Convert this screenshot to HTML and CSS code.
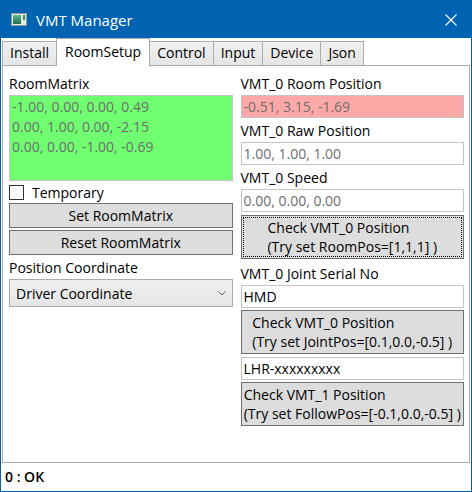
FILE: index.html
```html
<!DOCTYPE html>
<html lang="en">
<head>
<meta charset="utf-8">
<title>VMT Manager</title>
<link rel="stylesheet" href="styles.css">
</head>
<body>
<div class="window">
  <div class="titlebar">
    <svg class="app-icon" width="16" height="13" viewBox="0 0 16 13">
      <defs>
        <linearGradient id="ig" x1="0" y1="0" x2="0" y2="1">
          <stop offset="0" stop-color="#5fb88e"/>
          <stop offset="1" stop-color="#23704e"/>
        </linearGradient>
      </defs>
      <rect x="0.5" y="0.5" width="15" height="12" fill="#e4ebe7" stroke="#8f9a95"/>
      <rect x="2" y="2" width="8" height="9" fill="url(#ig)"/>
      <rect x="12" y="2" width="2" height="5" fill="#3d8c64"/>
    </svg>
    <span class="title">VMT Manager</span>
    <svg class="close" width="12" height="12" viewBox="0 0 12 12">
      <path d="M0.5 0.5L11.5 11.5M11.5 0.5L0.5 11.5" stroke="#ffffff" stroke-width="1.1" fill="none"/>
    </svg>
  </div>
  <div class="client">
    <div class="tabstrip">
      <div class="tab">Install</div>
      <div class="tab selected">RoomSetup</div>
      <div class="tab">Control</div>
      <div class="tab">Input</div>
      <div class="tab">Device</div>
      <div class="tab">Json</div>
    </div>
    <div class="panel">
      <div class="col">
        <div class="label">RoomMatrix</div>
        <div class="textbox readonly matrix">-1.00, 0.00, 0.00, 0.49<br>0.00, 1.00, 0.00, -2.15<br>0.00, 0.00, -1.00, -0.69</div>
        <div class="check"><span class="box"></span><span>Temporary</span></div>
        <div class="button"><span class="btn-text">Set RoomMatrix</span></div>
        <div class="button"><span class="btn-text">Reset RoomMatrix</span></div>
        <div class="label">Position Coordinate</div>
        <div class="combo">
          <span class="combo-text">Driver Coordinate</span>
          <svg class="chevron" width="8" height="5" viewBox="0 0 8 5"><path d="M0.5 0.5L4 4L7.5 0.5" stroke="#606060" stroke-width="1" fill="none"/></svg>
        </div>
      </div>
      <div class="col">
        <div class="label">VMT_0 Room Position</div>
        <div class="textbox readonly alert">-0.51, 3.15, -1.69</div>
        <div class="label">VMT_0 Raw Position</div>
        <div class="textbox readonly">1.00, 1.00, 1.00</div>
        <div class="label">VMT_0 Speed</div>
        <div class="textbox readonly">0.00, 0.00, 0.00</div>
        <div class="button tall focused"><span class="btn-text">Check VMT_0 Position<br>(Try set RoomPos=[1,1,1] )</span></div>
        <div class="label">VMT_0 Joint Serial No</div>
        <div class="textbox">HMD</div>
        <div class="button tall"><span class="btn-text">Check VMT_0 Position<br>(Try set JointPos=[0.1,0.0,-0.5] )</span></div>
        <div class="textbox">LHR-xxxxxxxxx</div>
        <div class="button tall"><span class="btn-text">Check VMT_1 Position<br>(Try set FollowPos=[-0.1,0.0,-0.5] )</span></div>
      </div>
    </div>
    <div class="statusbar">0 : OK</div>
  </div>
</div>
</body>
</html>
```

FILE: styles.css
```css
* { box-sizing: border-box; }
html, body { margin: 0; padding: 0; }
body {
  width: 472px;
  height: 492px;
  overflow: hidden;
  font-family: "Open Sans", "Noto Sans", sans-serif;
  font-size: 14px;
  color: #000;
  background: #fff;
}
.window {
  width: 472px;
  height: 492px;
  border: 1px solid #0063b1;
  display: flex;
  flex-direction: column;
  background: #fff;
}
.titlebar {
  height: 37px;
  flex: none;
  background: #0063b1;
  color: #fff;
  display: flex;
  align-items: center;
}
.app-icon { margin-left: 10px; flex: none; }
.title { margin-left: 9px; font-size: 15px; line-height: 20px; flex: 1; }
.close { margin-right: 14px; flex: none; }

.client { flex: 1; min-height: 0; display: flex; flex-direction: column; }

.tabstrip {
  height: 28px;
  flex: none;
  display: flex;
  align-items: flex-end;
  padding-left: 1px;
  margin-bottom: -1px;
  position: relative;
  z-index: 1;
}
.tab {
  height: 25px;
  border: 1px solid #acacac;
  background: linear-gradient(#f0f0f0, #e5e5e5);
  padding: 0 7px;
  line-height: 22px;
  margin-left: -1px;
  white-space: nowrap;
}
.tab:first-child { margin-left: 0; }
.tab.selected {
  height: 28px;
  background: #fff;
  border-bottom: none;
  padding: 0 8px;
  line-height: 26px;
  position: relative;
  z-index: 2;
}

.panel {
  flex: 1;
  min-height: 0;
  margin: 0 1px;
  border: 1px solid #acacac;
  display: grid;
  grid-template-columns: 1fr 1fr;
  column-gap: 8px;
  padding: 5px 5px 0 6px;
  align-items: start;
}
.col { display: flex; flex-direction: column; min-width: 0; }

.label {
  height: 24px;
  padding-top: 3px;
  line-height: 20px;
  white-space: nowrap;
}
.textbox {
  height: 23px;
  border: 1px solid #c4c4c4;
  background: #fff;
  padding: 0 2px;
  line-height: 21px;
  white-space: nowrap;
  overflow: hidden;
}
.textbox.readonly { color: #6d6d6d; }
.textbox.matrix {
  height: 86px;
  background: #70ff70;
  line-height: 20px;
  padding-top: 1px;
  white-space: normal;
}
.textbox.alert { background: #ffa8a8; }

.check {
  height: 22px;
  display: flex;
  align-items: center;
  gap: 8px;
}
.box {
  width: 15px;
  height: 15px;
  border: 1px solid #333;
  background: #fff;
  flex: none;
}

.button {
  height: 25px;
  border: 1px solid #707070;
  background: #dddddd;
  display: flex;
  padding: 0 1px;
  overflow: hidden;
}
.button + .button { margin-top: 2px; }
.btn-text { margin: auto; white-space: nowrap; line-height: 19px; }
.button.tall { height: 44px; margin-top: 2px; }
.button.focused { margin-top: 3px; outline: 1px dotted #000; outline-offset: -3px; }
.button.tall + .label { margin-top: 2px; }
.button.tall + .textbox { margin-top: 3px; }

.combo {
  height: 28px;
  border: 1px solid #acacac;
  background: linear-gradient(#f0f0f0, #e5e5e5);
  display: flex;
  align-items: center;
  padding: 0 6px 0 6px;
}
.combo-text { flex: 1; white-space: nowrap; }
.chevron { flex: none; }

.statusbar {
  height: 28px;
  flex: none;
  padding-left: 4px;
  line-height: 28px;
  font-weight: 600;
}
```
